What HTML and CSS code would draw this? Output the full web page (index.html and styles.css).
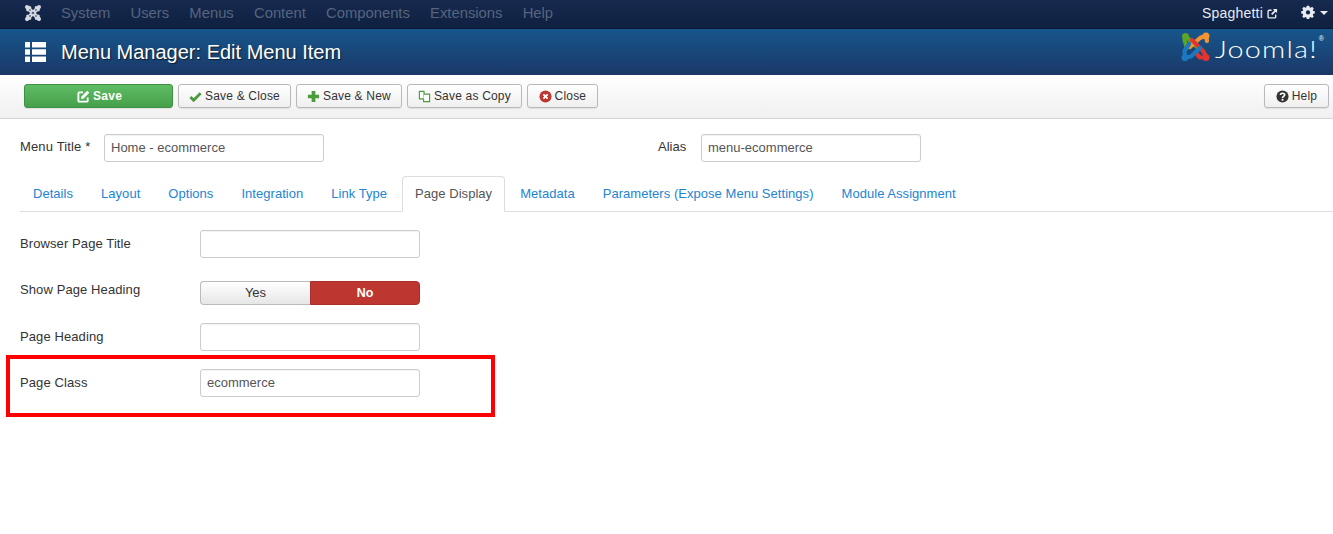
FILE: index.html
```html
<!DOCTYPE html>
<html lang="en">
<head>
    <meta charset="UTF-8">
    <title>Menu Manager: Edit Menu Item</title>
    <link rel="stylesheet" href="styles.css">
</head>
<body>
    <nav class="navbar">
        <svg class="nav-logo" viewBox="0 0 18 18">
            <g fill="none" stroke="#d5d9e0" stroke-linecap="round">
                <path d="M3 3L15 15M15 3L3 15" stroke-width="4"/>
                <path d="M6 3.500L3.500 6M12 3.500L14.500 6M6 14.500L3.500 12M12 14.500L14.500 12" stroke-width="2.600"/>
            </g>
            <g fill="#5a6a88">
                <circle cx="9" cy="9" r="1.300"/>
                <circle cx="6" cy="6" r=".9"/>
                <circle cx="12" cy="6" r=".9"/>
                <circle cx="6" cy="12" r=".9"/>
                <circle cx="12" cy="12" r=".9"/>
            </g>
        </svg>
        <ul class="nav-menu">
            <li>System</li>
            <li>Users</li>
            <li>Menus</li>
            <li>Content</li>
            <li>Components</li>
            <li>Extensions</li>
            <li>Help</li>
        </ul>
        <div class="nav-user">
            <span>Spaghetti</span>
            <svg class="nav-ext" viewBox="0 0 12 12">
                <path d="M5 2.500H2.200a1 1 0 0 0-1 1v6.300a1 1 0 0 0 1 1h6.300a1 1 0 0 0 1-1V7" fill="none" stroke="#e8ebf0" stroke-width="1.500"/>
                <path d="M6.500 1H11V5.500L9.400 4 5.800 7.600 4.400 6.200 8 2.600Z" fill="#e8ebf0"/>
            </svg>
            <svg class="nav-gear" viewBox="0 0 16 16">
                <path d="M6.600 0.800H9.400L9.800 2.700 11.100 3.200 12.700 2.100 14.600 4 13.500 5.600 14 6.900 15.800 7.200V9.800L14 10.100 13.500 11.500 14.600 13 12.700 14.900 11.100 13.800 9.800 14.300 9.400 16H6.600L6.200 14.300 4.900 13.800 3.300 14.900 1.400 13 2.500 11.500 2 10.100 0.200 9.800V7.200L2 6.900 2.500 5.600 1.400 4 3.300 2.100 4.900 3.200 6.200 2.700Z" fill="#e8ebf0"/>
                <circle cx="8" cy="8.500" r="2.400" fill="#10254a"/>
            </svg>
            <span class="caret"></span>
        </div>
    </nav>

    <header class="header">
        <svg class="header-icon" viewBox="0 0 21 20">
            <path d="M0 0h5v5.500H0zM7 0h14v5.500H7zM0 7.200h5v5.500H0zM7 7.200h14v5.500H7zM0 14.500h5V20H0zM7 14.500h14V20H7z" fill="#fff"/>
        </svg>
        <h1>Menu Manager: Edit Menu Item</h1>
        <div class="brand">
            <svg class="brand-mark" viewBox="0 0 29 29">
                <g fill="none" stroke-width="4.200" stroke-linecap="round" stroke-linejoin="round">
                    <path d="M6 16L3.500 8 5 4.500 16 15" stroke="#5ba427"/>
                    <path d="M9 15L19 6 25 3.500 26 9" stroke="#f39331"/>
                    <path d="M11 8L22 19 25.500 25 19 25.500 15 21" stroke="#e2332d"/>
                    <path d="M8 12L3.500 19 4 25.500 10 24.500 19 16" stroke="#1c78c0"/>
                </g>
                <circle cx="4.500" cy="4.500" r="3.500" fill="#5ba427"/>
                <circle cx="25" cy="4" r="3.500" fill="#f39331"/>
                <circle cx="25" cy="25.500" r="3.500" fill="#e2332d"/>
                <circle cx="4" cy="25.500" r="3.500" fill="#1c78c0"/>
            </svg>
            <span class="brand-name">Joomla!</span><span class="brand-reg">®</span>
        </div>
    </header>

    <div class="toolbar">
        <button class="btn btn-save">
            <svg class="icon" viewBox="0 0 14 14">
                <path d="M6.500 2.500H2.500a1 1 0 0 0-1 1v8a1 1 0 0 0 1 1h8a1 1 0 0 0 1-1V8" fill="none" stroke="#fff" stroke-width="2"/>
                <path d="M11 .8L13.200 3 7 9.300 4.300 9.800 4.800 7Z" fill="#fff"/>
            </svg>
            Save
        </button>
        <button class="btn">
            <svg class="icon" viewBox="0 0 14 14"><path d="M1.500 7.500L5 11 12.500 3.500" fill="none" stroke="#4b9c3b" stroke-width="3"/></svg>
            Save &amp; Close
        </button>
        <button class="btn">
            <svg class="icon" viewBox="0 0 14 14"><path d="M5 1h4v4h4v4H9v4H5V9H1V5h4z" fill="#4b9c3b"/></svg>
            Save &amp; New
        </button>
        <button class="btn">
            <svg class="icon" viewBox="0 0 14 14">
                <path d="M1.500 1.500H6.500V9.500H1.500Z" fill="#fff" stroke="#4b9c3b" stroke-width="1.200"/>
                <path d="M6.500 4.500H12.500V12.500H6V9.500" fill="#fff" stroke="#4b9c3b" stroke-width="1.200"/>
            </svg>
            Save as Copy
        </button>
        <button class="btn btn-close">
            <svg class="icon" viewBox="0 0 14 14">
                <circle cx="7" cy="7" r="6.500" fill="#bd362f"/>
                <path d="M4.700 4.700L9.300 9.300M9.300 4.700L4.700 9.300" stroke="#fff" stroke-width="2"/>
            </svg>
            Close
        </button>
        <button class="btn btn-help">
            <svg class="icon" viewBox="0 0 14 14">
                <circle cx="7" cy="7" r="6.500" fill="#333"/>
                <path d="M4.800 5.500C4.800 2.900 9.300 2.900 9.300 5.300 9.300 6.900 7 6.800 7 8.500" fill="none" stroke="#fff" stroke-width="1.800"/>
                <path d="M6 9.500h2v2H6z" fill="#fff"/>
            </svg>
            Help
        </button>
    </div>

    <main class="content">
        <div class="title-row">
            <div class="title-field">
                <label class="title-label">Menu Title *</label>
                <input class="text-input" type="text" value="Home - ecommerce">
            </div>
            <div class="title-field alias-field">
                <label class="alias-label">Alias</label>
                <input class="text-input" type="text" value="menu-ecommerce">
            </div>
        </div>

        <ul class="tabs">
            <li class="tab">Details</li>
            <li class="tab">Layout</li>
            <li class="tab">Options</li>
            <li class="tab">Integration</li>
            <li class="tab">Link Type</li>
            <li class="tab tab-active">Page Display</li>
            <li class="tab">Metadata</li>
            <li class="tab">Parameters (Expose Menu Settings)</li>
            <li class="tab">Module Assignment</li>
        </ul>

        <div class="form-row">
            <label class="row-label">Browser Page Title</label>
            <input class="text-input" type="text">
        </div>
        <div class="form-row toggle-row">
            <label class="row-label">Show Page Heading</label>
            <div class="toggle">
                <span class="toggle-yes">Yes</span>
                <span class="toggle-no">No</span>
            </div>
        </div>
        <div class="form-row">
            <label class="row-label">Page Heading</label>
            <input class="text-input" type="text">
        </div>
        <div class="form-row">
            <label class="row-label">Page Class</label>
            <input class="text-input" type="text" value="ecommerce">
        </div>
    </main>

    <div class="highlight"></div>
</body>
</html>
```

FILE: styles.css
```css
* { margin: 0; padding: 0; box-sizing: border-box; }
body {
    width: 100%;
    height: 534px;
    overflow: hidden;
    position: relative;
    background: #fff;
    font-family: "Liberation Sans", Arial, sans-serif;
    font-size: 13px;
    color: #333;
}
ul { list-style: none; }

/* top bar */
.navbar {
    height: 29px;
    display: flex;
    align-items: center;
    background: linear-gradient(#16294f, #0f2140);
    border-bottom: 1px solid #0b1a33;
    padding: 0 0 2px 24px;
}
.nav-logo { width: 18px; height: 18px; }
.nav-menu {
    display: flex;
    gap: 20.2px;
    margin-left: 19px;
    margin-top: -1px;
    font-size: 14.8px;
    color: #56647f;
}
.nav-user {
    margin-left: auto;
    display: flex;
    align-items: center;
    color: #e8ebf0;
    font-size: 14px;
    letter-spacing: 0.2px;
    padding-right: 5px;
}
.nav-ext { width: 11px; height: 11px; margin-left: 4px; }
.nav-gear { width: 14px; height: 14px; margin-left: 23px; margin-top: -3px; }
.caret {
    margin-left: 5px;
    border-top: 4px solid #e8ebf0;
    border-left: 4px solid transparent;
    border-right: 4px solid transparent;
}

/* blue title */
.header {
    height: 46px;
    display: flex;
    align-items: center;
    padding: 0 9px 0 25px;
    background: linear-gradient(#17568c, #1a3867);
    color: #fff;
}
.header-icon { width: 21px; height: 20px; margin-top: -1px; }
.header h1 {
    font-size: 20px;
    font-weight: normal;
    margin-left: 15px;
    text-shadow: 1px 1px 1px rgba(0, 0, 0, 0.6);
}
.brand {
    margin-left: auto;
    display: flex;
    align-items: flex-start;
    margin-top: -10px;
}
.brand-mark { width: 29px; height: 29px; margin-right: 5px; }
.brand-name {
    font-family: Lato, sans-serif;
    font-weight: 300;
    font-size: 24px;
    line-height: 29px;
    letter-spacing: 1px;
    width: 104px;
    margin-top: 2px;
    white-space: nowrap;
    transform: scaleX(1.2);
    transform-origin: left;
}
.brand-reg { font-size: 7px; line-height: 14px; }

/* buttons */
.toolbar {
    height: 44px;
    display: flex;
    align-items: center;
    gap: 5px;
    padding: 0 4px 1px 24px;
    background: linear-gradient(#fff, #f0f0f0);
    border-bottom: 1px solid #d6d6d6;
}
.btn {
    height: 24px;
    padding: 0 10px;
    display: flex;
    align-items: center;
    justify-content: center;
    gap: 3px;
    font-family: "Liberation Sans", Arial, sans-serif;
    font-size: 12px;
    letter-spacing: 0.19px;
    color: #333;
    background: linear-gradient(#fff, #efefef);
    border: 1px solid #b9b9b9;
    border-radius: 3px;
    box-shadow: 0 1px 1px rgba(0, 0, 0, 0.08);
}
.icon { width: 13px; height: 13px; }
.btn-save {
    width: 149px;
    padding-left: 12px;
    color: #fff;
    font-weight: bold;
    letter-spacing: 0.3px;
    background: linear-gradient(#5fbd64, #46a04a);
    border-color: #3f9142;
}
.btn-close { width: 71px; }
.btn-help { width: 65px; margin-left: auto; }

/* form */
.content { padding: 15px 0 0 20px; }
.title-row { display: flex; }
.title-field { display: flex; align-items: center; }
.title-label { width: 84px; margin-top: -4px; letter-spacing: 0.15px; }
.alias-field { margin-left: 334px; }
.alias-label { width: 43px; margin-top: -4px; }
.text-input {
    width: 220px;
    height: 28px;
    padding: 0 6px 2px;
    font-family: "Liberation Sans", Arial, sans-serif;
    font-size: 13px;
    color: #555;
    border: 1px solid #ccc;
    border-radius: 3px;
    box-shadow: inset 0 1px 1px rgba(0, 0, 0, 0.05);
    outline: none;
}
.tabs {
    display: flex;
    height: 36px;
    margin-top: 14px;
    margin-bottom: 18px;
    border-bottom: 1px solid #ddd;
    letter-spacing: 0.04px;
}
.tab {
    height: 36px;
    padding: 0 13px;
    margin-right: 2px;
    line-height: 36px;
    color: #2384d3;
}
.tab-active {
    color: #555;
    background: #fff;
    border: 1px solid #ddd;
    border-bottom-color: #fff;
    border-radius: 4px 4px 0 0;
    padding: 0 12px;
    line-height: 34px;
}
.form-row {
    display: flex;
    align-items: center;
    margin-bottom: 18px;
}
.row-label { width: 180px; margin-top: -2px; letter-spacing: 0.1px; }
.toggle-row { margin-top: 23px; margin-bottom: 18px; }
.toggle-row .row-label { margin-top: -8px; }
.toggle { display: flex; width: 220px; height: 24px; }
.toggle span {
    width: 110px;
    text-align: center;
    line-height: 22px;
}
.toggle-yes {
    color: #333;
    background: linear-gradient(#fff, #e6e6e6);
    border: 1px solid #bbb;
    border-right: 0;
    border-radius: 4px 0 0 4px;
}
.toggle-no {
    color: #fff;
    font-weight: bold;
    font-size: 12.5px;
    background: #bd362f;
    border: 1px solid #a9302a;
    border-radius: 0 4px 4px 0;
}

/* red marker drawn over the screenshot */
.highlight {
    position: absolute;
    left: 6px;
    top: 355px;
    width: 489px;
    height: 62px;
    border: 4px solid #f00;
}
```
